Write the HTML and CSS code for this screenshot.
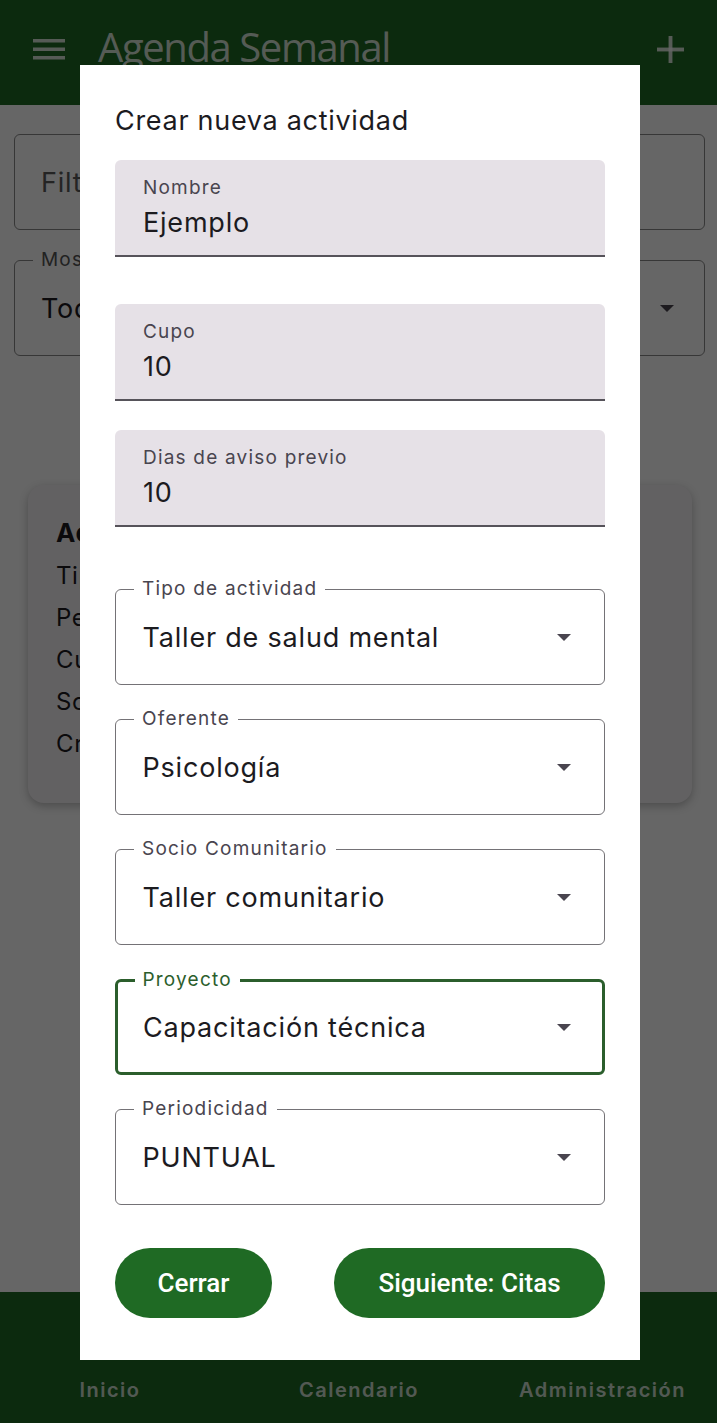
FILE: index.html
```html
<!doctype html>
<html lang="es">
  <head>
    <meta charset="UTF-8" />
    <meta name="viewport" content="width=device-width, initial-scale=1.0" />
    <title>Agenda Semanal</title>
    <link rel="stylesheet" href="styles.css">
  </head>
  <body>
    <div class="app">
      <!-- Barra superior -->
      <header class="topbar">
        <svg class="icon-menu" viewBox="0 0 32 24" fill="currentColor">
          <rect x="0" y="2" width="32" height="3.5"/>
          <rect x="0" y="10.5" width="32" height="3.5"/>
          <rect x="0" y="19" width="32" height="3.5"/>
        </svg>
        <h1 class="topbar-title">Agenda Semanal</h1>
        <svg class="icon-add" viewBox="0 0 28 28" fill="currentColor">
          <rect x="12" y="0" width="4" height="28"/>
          <rect x="0" y="12" width="28" height="4"/>
        </svg>
      </header>

      <!-- Contenido de la agenda -->
      <main class="content">
        <div class="bg-field">
          <span class="bg-placeholder">Filtrar</span>
        </div>
        <div class="bg-field bg-select">
          <span class="bg-label">Mostrar</span>
          <span class="bg-value">Todas</span>
          <span class="arrow"></span>
        </div>
        <div class="bg-card">
          <p class="bg-card-title">Actividad</p>
          <p>Tipo</p>
          <p>Periodo</p>
          <p>Cupo</p>
          <p>Socio</p>
          <p>Creado</p>
        </div>
      </main>

      <!-- Navegación inferior -->
      <nav class="bottom-nav">
        <span>Inicio</span>
        <span>Calendario</span>
        <span>Administración</span>
      </nav>
    </div>

    <!-- Diálogo: nueva actividad -->
    <div class="scrim">
      <div class="dialog">
        <h2 class="dialog-title">Crear nueva actividad</h2>

        <div class="filled f-nombre">
          <span class="lbl">Nombre</span>
          <span class="val">Ejemplo</span>
        </div>
        <div class="filled f-cupo">
          <span class="lbl">Cupo</span>
          <span class="val">10</span>
        </div>
        <div class="filled f-dias">
          <span class="lbl">Dias de aviso previo</span>
          <span class="val">10</span>
        </div>

        <div class="outlined s-first">
          <span class="lbl">Tipo de actividad</span>
          <span class="val">Taller de salud mental</span>
          <span class="arrow"></span>
        </div>
        <div class="outlined">
          <span class="lbl">Oferente</span>
          <span class="val">Psicología</span>
          <span class="arrow"></span>
        </div>
        <div class="outlined">
          <span class="lbl">Socio Comunitario</span>
          <span class="val">Taller comunitario</span>
          <span class="arrow"></span>
        </div>
        <div class="outlined focused">
          <span class="lbl">Proyecto</span>
          <span class="val">Capacitación técnica</span>
          <span class="arrow"></span>
        </div>
        <div class="outlined">
          <span class="lbl">Periodicidad</span>
          <span class="val">PUNTUAL</span>
          <span class="arrow"></span>
        </div>

        <div class="dialog-actions">
          <button class="btn btn-close">Cerrar</button>
          <button class="btn btn-next">Siguiente: Citas</button>
        </div>
      </div>
    </div>
  </body>
</html>
```

FILE: styles.css
```css
* {
  margin: 0;
  padding: 0;
  box-sizing: border-box;
}

body {
  width: 717px;
  height: 1423px;
  overflow: hidden;
  font-family: Inter, "DejaVu Sans", sans-serif;
  background: #fefefe;
}

.app {
  display: flex;
  flex-direction: column;
  height: 1423px;
}

/* Barra superior */
.topbar {
  height: 105px;
  background: #1f6a24;
  color: rgba(255, 255, 255, 0.82);
  display: flex;
  align-items: center;
  padding: 0 33px 7px;
}

.icon-menu {
  width: 32px;
  height: 24px;
}

.topbar-title {
  font-family: "Open Sans", sans-serif;
  font-weight: 400;
  font-size: 40px;
  line-height: 40px;
  letter-spacing: -1.4px;
  margin: 0 0 5px 33px;
  flex: 1;
}

.icon-add {
  width: 27px;
  height: 27px;
}

/* Contenido */
.content {
  flex: 1;
  padding: 29px 12px 0 14px;
}

.bg-field {
  position: relative;
  height: 96px;
  border: 1.5px solid #8a8a8a;
  border-radius: 6px;
  display: flex;
  align-items: center;
  padding: 0 26px;
  font-size: 27px;
  letter-spacing: 0.8px;
}

.bg-placeholder {
  color: #5a5a5a;
}

.bg-select {
  margin-top: 30px;
  justify-content: space-between;
}

.bg-label {
  position: absolute;
  top: -12px;
  left: 18px;
  padding: 0 8px;
  font-size: 19px;
  line-height: 22px;
  letter-spacing: 1.2px;
  color: #555;
  background: #fefefe;
}

.bg-value {
  color: #1c1b1f;
}

.bg-card {
  margin: 129px 13px 0 14px;
  height: 318px;
  border-radius: 16px;
  background: #f6f3f6;
  box-shadow: 0 3px 8px rgba(0, 0, 0, 0.25);
  padding: 30px 28px;
  font-size: 24px;
  letter-spacing: 0.6px;
  color: #1c1b1f;
}

.bg-card p {
  line-height: 42px;
}

.bg-card .bg-card-title {
  font-weight: 700;
  font-size: 26px;
  line-height: 36px;
  margin-bottom: 4px;
}

/* Navegación inferior */
.bottom-nav {
  height: 131px;
  background: #1f6a24;
  display: grid;
  grid-template-columns: 220px 278px 1fr;
  align-items: end;
  padding: 0 10px 21px 0;
  font-size: 20px;
  font-weight: 600;
  letter-spacing: 1.5px;
  color: rgba(255, 255, 255, 0.8);
  text-align: center;
}

/* Capa del diálogo */
.scrim {
  position: fixed;
  top: 0;
  left: 0;
  width: 100%;
  height: 100%;
  background: rgba(0, 0, 0, 0.6);
  display: flex;
  align-items: flex-start;
  padding: 65px 0 0 80px;
}

.dialog {
  width: 560px;
  height: 1295px;
  background: #fff;
  padding: 40px 35px 0;
  display: flex;
  flex-direction: column;
}

.dialog-title {
  font-size: 27px;
  font-weight: 400;
  line-height: 32px;
  letter-spacing: 0.7px;
  color: #1c1b1f;
  margin-bottom: 23px;
}

/* Campo relleno */
.filled {
  height: 97px;
  background: #e6e1e7;
  border-bottom: 2px solid #56535a;
  border-radius: 6px 6px 0 0;
  padding: 16px 28px 0;
  display: flex;
  flex-direction: column;
}

.filled .lbl {
  font-size: 19px;
  line-height: 24px;
  letter-spacing: 1.2px;
  color: #49454f;
}

.filled .val {
  font-size: 27px;
  line-height: 46px;
  letter-spacing: 0.8px;
  color: #1c1b1f;
}

.f-cupo {
  margin-top: 47px;
}

.f-dias {
  margin-top: 29px;
}

/* Campo con contorno */
.outlined {
  position: relative;
  height: 96px;
  margin-top: 34px;
  border: 1.5px solid #747276;
  border-radius: 6px;
  display: flex;
  align-items: center;
  justify-content: space-between;
  padding: 0 33px 0 26.5px;
}

.outlined.s-first {
  margin-top: 62px;
}

.outlined .lbl {
  position: absolute;
  top: -12px;
  left: 18px;
  padding: 0 8px;
  background: #fff;
  font-size: 19px;
  line-height: 22px;
  letter-spacing: 1.2px;
  color: #49454f;
}

.outlined .val {
  font-size: 27px;
  letter-spacing: 0.8px;
  color: #1c1b1f;
}

.outlined.focused {
  border: 3px solid #2b5e2c;
  padding: 0 31.5px 0 25px;
}

.outlined.focused .lbl {
  left: 16.5px;
  top: -13.5px;
  color: #2b5e2c;
}

.arrow {
  width: 0;
  height: 0;
  border-left: 7px solid transparent;
  border-right: 7px solid transparent;
  border-top: 7px solid #49454f;
}

.bg-select .arrow {
  margin-right: 4px;
}

/* Botones */
.dialog-actions {
  margin-top: 43px;
  display: flex;
  justify-content: space-between;
}

.btn {
  height: 70px;
  border: none;
  border-radius: 35px;
  background: #1f6a24;
  color: #fff;
  font-family: Roboto, sans-serif;
  font-weight: 500;
  font-size: 26px;
}

.btn-close {
  width: 157px;
}

.btn-next {
  width: 271px;
}
```
